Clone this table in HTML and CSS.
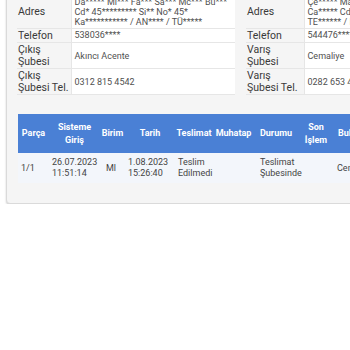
FILE: index.html
```html
<!DOCTYPE html>
<html lang="tr">
<head>
<meta charset="utf-8">
<title>Gönderi Detayı</title>
<link rel="stylesheet" href="styles.css">
</head>
<body>
<div class="card">
  <div class="info">
    <table class="kv sender">
      <colgroup><col class="k"><col class="v"></colgroup>
      <tr><th>Gönderen</th><td>Ay**** Ka***</td></tr>
      <tr><th>Adres</th><td>Da***** Mi*** Fa*** Sa*** Mc*** Bu***<br>Cd* 45********* Si** No* 45*<br>Ka*********** / AN**** / TÜ*****</td></tr>
      <tr><th>Telefon</th><td>538036****</td></tr>
      <tr><th>Çıkış<br>Şubesi</th><td>Akıncı Acente</td></tr>
      <tr><th>Çıkış<br>Şubesi Tel.</th><td>0312 815 4542</td></tr>
    </table>
    <table class="kv receiver">
      <colgroup><col class="k"><col class="v"></colgroup>
      <tr><th>Alıcı</th><td>Me**** Yı****</td></tr>
      <tr><th>Adres</th><td>Çe***** Ma*** No* 8*<br>Ca***** Cd* No* 12* Da* 3*<br>TE****** / KE****** / TE*****</td></tr>
      <tr><th>Telefon</th><td>544476****</td></tr>
      <tr><th>Varış<br>Şubesi</th><td>Cemaliye</td></tr>
      <tr><th>Varış<br>Şubesi Tel.</th><td>0282 653 4821</td></tr>
    </table>
  </div>

  <table class="parts">
    <colgroup>
      <col class="c-parca"><col class="c-giris"><col class="c-birim"><col class="c-tarih">
      <col class="c-teslim"><col class="c-muhatap"><col class="c-durum"><col class="c-son"><col class="c-bul">
    </colgroup>
    <thead>
      <tr>
        <th>Parça</th>
        <th>Sisteme<br>Giriş</th>
        <th>Birim</th>
        <th>Tarih</th>
        <th>Teslimat</th>
        <th>Muhatap</th>
        <th>Durumu</th>
        <th>Son<br>İşlem</th>
        <th class="left">Bulunduğu Şube</th>
      </tr>
    </thead>
    <tbody>
      <tr>
        <td>1/1</td>
        <td>26.07.2023<br>11:51:14</td>
        <td class="mid">Ml</td>
        <td>1.08.2023<br>15:26:40</td>
        <td>Teslim<br>Edilmedi</td>
        <td></td>
        <td class="wide">Teslimat<br>Şubesinde</td>
        <td></td>
        <td>Cemaliye</td>
      </tr>
    </tbody>
  </table>
</div>
</body>
</html>
```

FILE: styles.css
```css
html, body {
  margin: 0;
  overflow: hidden;
  background: #fff;
  font-family: Roboto, "Noto Sans", "Liberation Sans", sans-serif;
}

.card {
  margin: -20px 0 0 6px;
  width: 500px;
  padding: 0 0 20px 10px;
  background: #f5f5f5;
  border: 1px solid #dadada;
  border-radius: 4px;
  box-shadow: 0 1px 2px rgba(0, 0, 0, 0.2);
}

/* sender / receiver key-value tables */
.info {
  display: flex;
  gap: 11px;
  align-items: flex-start;
}

.kv {
  border-collapse: collapse;
  table-layout: fixed;
}

.sender { width: 218px; }
.sender col.k { width: 54px; }

.receiver { width: 230px; }
.receiver col.k { width: 58px; }

.kv th,
.kv td {
  padding: 1px 3px;
  vertical-align: middle;
  border-bottom: 1px solid #e6e6e6;
  white-space: nowrap;
  overflow: hidden;
}

.kv th {
  padding-left: 1px;
  text-align: left;
  font-weight: 400;
  font-size: 10.5px;
  line-height: 11.5px;
  color: #3a3a3a;
  background: #f5f5f5;
  border-right: 1px solid #e6e6e6;
}

.kv td {
  font-size: 9px;
  line-height: 10px;
  color: #505050;
  background: #fff;
}

/* parcel movement table */
.parts {
  margin: 19px 0 0 1px;
  width: 396px;
  border-collapse: collapse;
  table-layout: fixed;
}

.c-parca { width: 31px; }
.c-giris { width: 51px; }
.c-birim { width: 25px; }
.c-tarih { width: 50px; }
.c-teslim { width: 38px; }
.c-muhatap { width: 41px; }
.c-durum { width: 44px; }
.c-son { width: 36px; }
.c-bul { width: 80px; }

.parts th {
  background: #4a80d5;
  color: #fff;
  font-size: 9px;
  font-weight: 700;
  line-height: 12.5px;
  padding: 7px 1px;
  text-align: center;
  vertical-align: middle;
  white-space: nowrap;
}

.parts th.left {
  text-align: left;
  padding-left: 4px;
}

.parts td {
  background: #f3f6fb;
  color: #444;
  font-size: 9px;
  line-height: 11px;
  padding: 4px 3px;
  vertical-align: middle;
  white-space: nowrap;
}

.parts td.mid { padding-left: 6px; }
.parts td.wide { padding-left: 6px; }
```
